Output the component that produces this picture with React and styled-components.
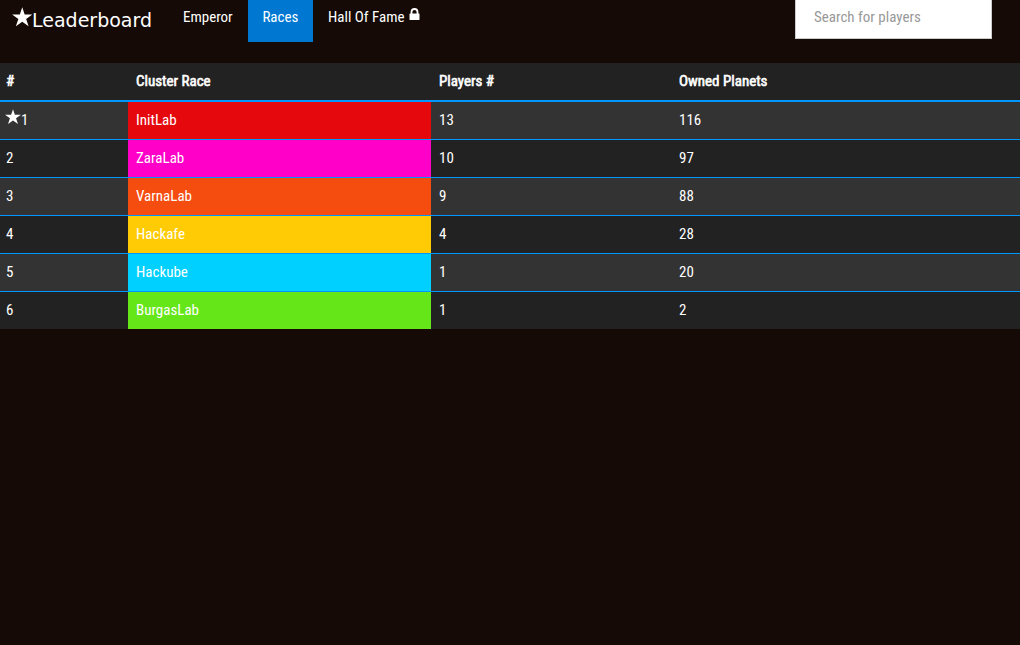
import React from "react";
import styled, { createGlobalStyle } from "styled-components";

const GlobalStyle = createGlobalStyle`
  * { box-sizing: border-box; }
  body {
    margin: 0;
    background: #150a05;
    color: #fff;
    font: 15px/21px "Roboto Condensed", Roboto, sans-serif;
  }
`;

const Navbar = styled.header`
  display: flex;
  align-items: flex-start;
  height: 63px;
  padding: 0 28px 0 11.5px;
`;

const Brand = styled.a`
  display: flex;
  width: 156.7px;
  padding-top: 8px;
  font: 19px/25px "DejaVu Sans", sans-serif;
`;

const Star = styled.svg`
  flex: none;
  width: ${(p) => p.$size}px;
  height: ${(p) => p.$size}px;
  margin-top: -1px;
  fill: #fff;
`;

const Nav = styled.nav`
  display: flex;
  gap: 0.7px;
`;

const NavItem = styled.a`
  display: flex;
  height: 42px;
  padding: 7px 14.5px 0;
  background: ${(p) => (p.$active ? "#0078d2" : "transparent")};

  &:first-child { padding-left: 14.8px; }
`;

const Lock = styled.svg`
  width: 11px;
  height: 13px;
  margin: 1px 0 0 4px;
`;

const Search = styled.input`
  width: 197px;
  height: 39px;
  margin-left: auto;
  padding: 0 18px 5px;
  border: 1px solid #ccc;
  border-top: 0;
  border-radius: 0;
  background: #fff;
  color: #555;
  font: inherit;
  &::placeholder { color: #999; opacity: 1; }
`;

const Table = styled.div`
  display: flex;
  flex-direction: column;
`;

const Row = styled.div`
  display: grid;
  grid-template-columns: 128px 303px 240px 1fr;
  height: ${(p) => (p.$line ? 38 : 37)}px;
  border-top: ${(p) => (p.$line ? "1px solid #0096ff" : "0")};
  background: ${(p) => (p.$odd ? "#333" : "#222")};
`;

const HeadRow = styled(Row)`
  height: 39px;
  border-bottom: 2px solid #0096ff;
  -webkit-text-stroke: 0.6px #fff;
`;

const Cell = styled.div`
  padding: 8px 8px 0;
  background: ${(p) => p.$color || "transparent"};
`;

const RankCell = styled(Cell)`
  display: flex;
  padding-left: ${(p) => (p.$starred ? 5 : 6)}px;
`;

const StarIcon = ({ size }) => (
  <Star $size={size} viewBox="0 0 20 20">
    <path d="M10 0.2 L12.35 7.2 L19.9 7.2 L13.8 11.6 L16.2 18.8 L10 14.4 L3.8 18.8 L6.2 11.6 L0.1 7.2 L7.65 7.2 Z" />
  </Star>
);

const races = [
  ["InitLab", "#e5090e", 13, 116],
  ["ZaraLab", "#ff00c8", 10, 97],
  ["VarnaLab", "#f54c10", 9, 88],
  ["Hackafe", "#ffcb05", 4, 28],
  ["Hackube", "#00d0ff", 1, 20],
  ["BurgasLab", "#65e619", 1, 2],
];

export default function App() {
  return (
    <>
      <GlobalStyle />
      <Navbar>
        <Brand><StarIcon size={20.5} />Leaderboard</Brand>
        <Nav>
          <NavItem>Emperor</NavItem>
          <NavItem $active>Races</NavItem>
          <NavItem>
            Hall Of Fame
            <Lock viewBox="0 0 11 13">
              <rect x="0.5" y="5.5" width="10" height="6.5" rx="0.4" fill="#fff" />
              <path d="M2.5 6.5V4a3 3 0 0 1 6 0V6.5" fill="none" stroke="#fff" strokeWidth="1.8" />
            </Lock>
          </NavItem>
        </Nav>
        <Search placeholder="Search for players" />
      </Navbar>
      <Table>
        <HeadRow>
          <RankCell>#</RankCell>
          <Cell>Cluster Race</Cell>
          <Cell>Players #</Cell>
          <Cell>Owned Planets</Cell>
        </HeadRow>
        {races.map(([name, color, players, planets], i) => (
          <Row key={name} $odd={i % 2 === 0} $line={i > 0}>
            <RankCell $starred={i === 0}>{i === 0 && <StarIcon size={16} />}{i + 1}</RankCell>
            <Cell $color={color}>{name}</Cell>
            <Cell>{players}</Cell>
            <Cell>{planets}</Cell>
          </Row>
        ))}
      </Table>
    </>
  );
}
